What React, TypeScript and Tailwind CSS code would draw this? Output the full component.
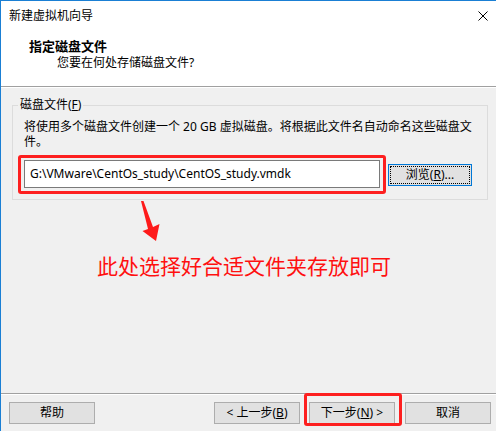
const FONT = { fontFamily: '"Noto Sans", "Noto Sans CJK SC", sans-serif' };

function Btn({ children, className = "" }: { children: React.ReactNode; className?: string }) {
  return (
    <div
      className={`flex h-[22px] w-[86px] items-center justify-center border border-[#adadad] bg-[#e1e1e1] text-[12px] text-black ${className}`}
    >
      {children}
    </div>
  );
}

export default function App() {
  return (
    <div
      className="flex h-[431px] w-[496px] flex-col border-l border-t border-[#1a7fd4] bg-[#f0f0f0] text-[12px] leading-[16px] text-black"
      style={FONT}
    >
      {/* title bar */}
      <div className="flex h-[29px] shrink-0 items-center justify-between bg-white pl-[8px] pr-[8px]">
        <span>新建虚拟机向导</span>
        <svg width="10" height="10" viewBox="0 0 10 10" className="block">
          <path d="M0.5 0.5 L9.5 9.5 M9.5 0.5 L0.5 9.5" stroke="#000" strokeWidth="1" />
        </svg>
      </div>

      {/* header */}
      <div className="h-[57px] shrink-0 border-b border-[#a0a0a0] bg-white pl-[28px] pt-[8px]">
        <div className="text-[13px] font-bold leading-[16px]">指定磁盘文件</div>
        <div className="ml-[28px] mt-[1px]">您要在何处存储磁盘文件?</div>
      </div>
      <div className="h-px shrink-0 bg-white" />

      {/* body */}
      <div className="flex-1">
        <fieldset className="ml-[11px] mt-[9px] w-[476px] border border-[#dcdcdc] px-[5px] pb-[5px]">
          <legend className="px-[2px]">
            磁盘文件(<span className="underline">F</span>)
          </legend>
          <div className="mt-[6px] pl-[6px] leading-[15px]">
            将使用多个磁盘文件创建一个 20 GB 虚拟磁盘。将根据此文件名自动命名这些磁盘文
            <br />
            件。
          </div>
          <div className="mt-[6px] flex items-center">
            <div className="rounded-[3px] border-[3px] border-[#fd1f1f] px-[3px] pb-[3px] pt-[2px]">
              <div className="flex h-[28px] w-[356px] items-center border border-[#7a7a7a] bg-white pl-[5px]">
                G:\VMware\CentOs_study\CentOS_study.vmdk
              </div>
            </div>
            <div className="ml-[2px] h-[22px] w-[84px] border border-[#0078d7] bg-[#e1e1e1] p-[1px]">
              <div className="flex h-full w-full items-center justify-center border border-dotted border-black">
                浏览(<span className="underline">R</span>)...
              </div>
            </div>
          </div>
        </fieldset>

        {/* annotation arrow */}
        <svg width="24" height="42" viewBox="138 200 24 42" className="ml-[137px] block">
          <polygon
            points="141,201 143.5,201 153,227 159.5,224 156,241 142.5,231 148,229"
            fill="#fe1a1a"
          />
        </svg>
        <div className="ml-[96px] mt-[10px] text-[21px] leading-[28px] text-[#ff1010]">
          此处选择好合适文件夹存放即可
        </div>
      </div>

      {/* footer */}
      <div className="h-[38px] shrink-0 border-t border-[#a0a0a0]">
        <div className="h-px bg-white" />
        <div className="flex items-center pt-[7px] pl-[8px] pr-[5px]">
          <Btn>帮助</Btn>
          <div className="ml-auto flex items-center">
            <Btn>
              &lt; 上一步(<span className="underline">B</span>)
            </Btn>
            <div className="relative ml-[9px]">
              <Btn>
                下一步(<span className="underline">N</span>) &gt;
              </Btn>
              <div className="pointer-events-none absolute -bottom-[2px] -left-[5px] -right-[7px] -top-[9px] rounded-[3px] border-[3px] border-[#fd1f1f]" />
            </div>
            <Btn className="ml-[10px]">取消</Btn>
          </div>
        </div>
      </div>
    </div>
  );
}
